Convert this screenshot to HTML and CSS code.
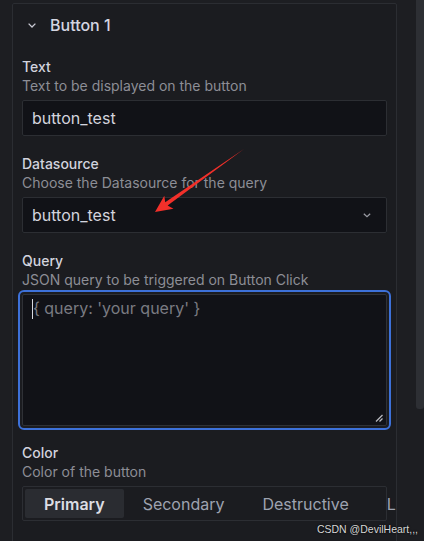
FILE: index.html
```html
<!DOCTYPE html>
<html lang="en">
<head>
  <meta charset="UTF-8">
  <title>Button panel options</title>
  <link rel="stylesheet" href="styles.css">
</head>
<body>

  <div class="layout">
    <main class="editor">
      <section class="panel">
        <header class="panel-head">
          <svg class="chevron" width="8" height="5" viewBox="0 0 8 5"><polyline points="0.6,0.6 4,4 7.4,0.6" fill="none" stroke="#c7c8d2" stroke-width="1.3"/></svg>
          <span>Button 1</span>
        </header>

        <div class="field">
          <div class="label">Text</div>
          <div class="desc">Text to be displayed on the button</div>
          <div class="input">button_test</div>
        </div>

        <div class="field">
          <div class="label">Datasource</div>
          <div class="desc">Choose the Datasource for the query</div>
          <div class="input select">
            <span>button_test</span>
            <svg width="8" height="5" viewBox="0 0 8 5"><polyline points="0.8,0.8 4,3.8 7.2,0.8" fill="none" stroke="#9a9ba3" stroke-width="1.2"/></svg>
          </div>
        </div>

        <div class="field field-query">
          <div class="label">Query</div>
          <div class="desc">JSON query to be triggered on Button Click</div>
          <div class="textarea">
            <span class="caret"></span><span class="placeholder">{ query: 'your query' }</span>
            <svg class="grip" width="8" height="8" viewBox="0 0 8 8"><line x1="1" y1="7.5" x2="7.5" y2="1" stroke="#b9bac0" stroke-width="1.2"/><line x1="4.5" y1="7.5" x2="7.5" y2="4.5" stroke="#b9bac0" stroke-width="1.2"/></svg>
          </div>
        </div>

        <div class="field">
          <div class="label">Color</div>
          <div class="desc">Color of the button</div>
          <div class="radio-group">
            <div class="radio active">Primary</div>
            <div class="radio">Secondary</div>
            <div class="radio">Destructive</div>
            <div class="radio">Link</div>
          </div>
        </div>
      </section>
    </main>
    <div class="scrollbar"><div class="thumb"></div></div>
  </div>

  <svg class="annotation" width="424" height="541" viewBox="0 0 424 541">
    <polygon points="244,149 167.6,205.5 173.5,208.7 155,212 164.3,195.7 165.2,202.3" fill="#f2302a"/>
  </svg>

  <div class="watermark">CSDN @DevilHeart,,,</div>

</body>
</html>
```

FILE: styles.css
```css
* {
  box-sizing: border-box;
}

body {
  margin: 0;
  height: 541px;
  overflow: hidden;
  background: #1d1e22;
  font-family: Inter, 'Noto Sans', sans-serif;
  color: #ccccdc;
  position: relative;
}

.layout {
  display: flex;
  height: 100%;
}

.editor {
  width: 416px;
  padding: 3px 0 0 12px;
}

.panel {
  width: 385px;
  border: 1px solid #2b2d32;
  border-radius: 2px;
  background: #1b1c20;
  padding: 0 9px 60px 9px;
  overflow: hidden;
}

.panel-head {
  display: flex;
  align-items: center;
  gap: 14px;
  padding: 11px 0 22px 6px;
  font-size: 16px;
  line-height: 20px;
  font-weight: 500;
  color: #d4d5e0;
}

.field {
  margin-bottom: 18px;
}

.field-query {
  margin-bottom: 17px;
}

.label {
  font-size: 14px;
  line-height: 19px;
  font-weight: 500;
  color: #d2d3de;
}

.desc {
  font-size: 14px;
  line-height: 20px;
  color: #8d8e96;
  margin-bottom: 4px;
}

.input {
  height: 36px;
  border: 1px solid #2c2e33;
  border-radius: 2px;
  background: #111217;
  padding: 0 9px;
  display: flex;
  align-items: center;
  font-size: 16px;
  color: #d3d4de;
}

.select {
  justify-content: space-between;
  padding-right: 15px;
}

.textarea {
  position: relative;
  height: 132px;
  border: 1px solid #2f3136;
  border-radius: 2px;
  background: #111217;
  outline: 2px solid #3d71d9;
  outline-offset: 2px;
  padding: 3px 9px;
  font-size: 16px;
  line-height: 20px;
  display: flex;
  align-items: flex-start;
}

.caret {
  width: 1px;
  height: 20px;
  margin-top: 1px;
  background: #d8d9e0;
}

.placeholder {
  color: #7a7b82;
}

.grip {
  position: absolute;
  right: 3px;
  bottom: 3px;
}

.radio-group {
  height: 35px;
  border: 1px solid #2c2e33;
  border-radius: 2px;
  padding: 2px;
  display: flex;
}

.radio {
  flex-shrink: 0;
  padding: 0 19px;
  display: flex;
  align-items: center;
  font-size: 16px;
  color: #9ea3b0;
  border-radius: 2px;
}

.radio.active {
  background: #2a2c31;
  color: #dcdde3;
  font-weight: 600;
}

.scrollbar {
  width: 8px;
}

.scrollbar .thumb {
  height: 409px;
  background: #2d2f34;
  border-radius: 0 0 3px 3px;
}

.annotation {
  position: absolute;
  left: 0;
  top: 0;
  pointer-events: none;
}

.watermark {
  position: absolute;
  right: 6px;
  bottom: 6px;
  font-family: 'Liberation Sans', Arial, sans-serif;
  font-size: 10.5px;
  line-height: 12px;
  color: #d6d6d6;
  text-shadow: 0 0 2px #000;
}
```
